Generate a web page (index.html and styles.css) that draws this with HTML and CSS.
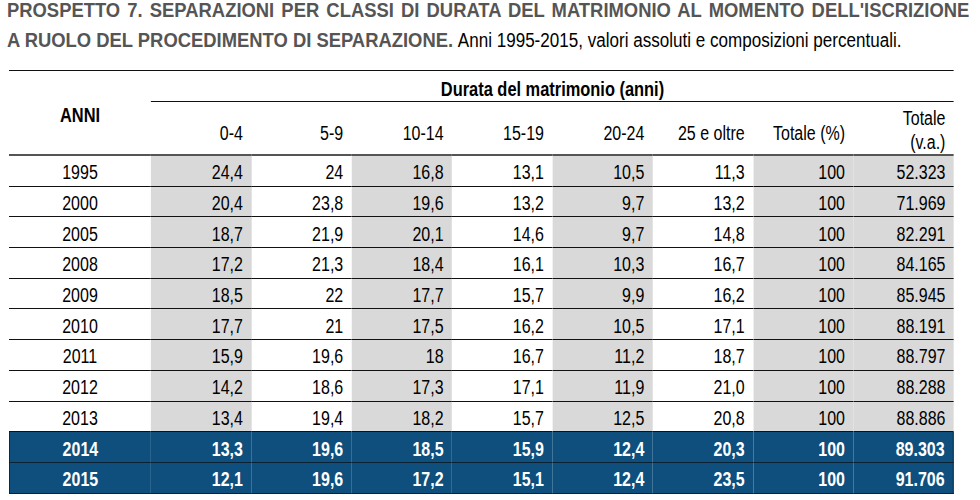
FILE: index.html
```html
<!DOCTYPE html>
<html lang="it">
<head>
<meta charset="utf-8">
<title>Prospetto 7</title>
<link rel="stylesheet" href="styles.css">
</head>
<body>
<div class="page">
  <p class="title"><span class="t1 title-bold">PROSPETTO 7. SEPARAZIONI PER CLASSI DI DURATA DEL MATRIMONIO AL MOMENTO DELL'ISCRIZIONE</span><span class="t2"><span class="title-bold">A RUOLO DEL PROCEDIMENTO DI SEPARAZIONE.</span> <span class="title-sub">Anni 1995-2015, valori assoluti e composizioni percentuali.</span></span></p>
  <table class="tbl">
    <colgroup>
      <col class="c-anni">
      <col span="8">
    </colgroup>
    <thead>
      <tr class="hrow-a">
        <th class="h-anni" rowspan="2">ANNI</th>
        <th class="h-group" colspan="8">Durata del matrimonio (anni)</th>
      </tr>
      <tr class="hrow-b">
        <th class="h-col">0-4</th>
        <th class="h-col">5-9</th>
        <th class="h-col">10-14</th>
        <th class="h-col">15-19</th>
        <th class="h-col">20-24</th>
        <th class="h-col">25 e oltre</th>
        <th class="h-col">Totale (%)</th>
        <th class="h-col h-two">Totale<br>(v.a.)</th>
      </tr>
    </thead>
    <tbody>
      <tr><td>1995</td><td class="sh">24,4</td><td>24</td><td class="sh">16,8</td><td>13,1</td><td class="sh">10,5</td><td>11,3</td><td class="sh">100</td><td class="sh">52.323</td></tr>
      <tr><td>2000</td><td class="sh">20,4</td><td>23,8</td><td class="sh">19,6</td><td>13,2</td><td class="sh">9,7</td><td>13,2</td><td class="sh">100</td><td class="sh">71.969</td></tr>
      <tr><td>2005</td><td class="sh">18,7</td><td>21,9</td><td class="sh">20,1</td><td>14,6</td><td class="sh">9,7</td><td>14,8</td><td class="sh">100</td><td class="sh">82.291</td></tr>
      <tr><td>2008</td><td class="sh">17,2</td><td>21,3</td><td class="sh">18,4</td><td>16,1</td><td class="sh">10,3</td><td>16,7</td><td class="sh">100</td><td class="sh">84.165</td></tr>
      <tr><td>2009</td><td class="sh">18,5</td><td>22</td><td class="sh">17,7</td><td>15,7</td><td class="sh">9,9</td><td>16,2</td><td class="sh">100</td><td class="sh">85.945</td></tr>
      <tr><td>2010</td><td class="sh">17,7</td><td>21</td><td class="sh">17,5</td><td>16,2</td><td class="sh">10,5</td><td>17,1</td><td class="sh">100</td><td class="sh">88.191</td></tr>
      <tr><td>2011</td><td class="sh">15,9</td><td>19,6</td><td class="sh">18</td><td>16,7</td><td class="sh">11,2</td><td>18,7</td><td class="sh">100</td><td class="sh">88.797</td></tr>
      <tr><td>2012</td><td class="sh">14,2</td><td>18,6</td><td class="sh">17,3</td><td>17,1</td><td class="sh">11,9</td><td>21,0</td><td class="sh">100</td><td class="sh">88.288</td></tr>
      <tr><td>2013</td><td class="sh">13,4</td><td>19,4</td><td class="sh">18,2</td><td>15,7</td><td class="sh">12,5</td><td>20,8</td><td class="sh">100</td><td class="sh">88.886</td></tr>
      <tr class="hl"><td>2014</td><td>13,3</td><td>19,6</td><td>18,5</td><td>15,9</td><td>12,4</td><td>20,3</td><td>100</td><td>89.303</td></tr>
      <tr class="hl"><td>2015</td><td>12,1</td><td>19,6</td><td>17,2</td><td>15,1</td><td>12,4</td><td>23,5</td><td>100</td><td>91.706</td></tr>
    </tbody>
  </table>
</div>
</body>
</html>
```

FILE: styles.css
```css
html, body {
  margin: 0;
  padding: 0;
  background: #fff;
}

body {
  font-family: "Liberation Sans", Arial, sans-serif;
  color: #000;
}

/* Arial Narrow is not available: Liberation Sans (Arial metrics) is
   condensed horizontally to approximate the narrow width. */
.page {
  padding: 0 0 0 7px;
  overflow: hidden;
}

.title {
  margin: -4px 0 0 0;
  width: 1046px;
  font-size: 20px;
  line-height: 29.5px;
  color: #000;
  transform: scaleX(0.92);
  transform-origin: left top;
}

.t1 {
  display: block;
  text-align: justify;
  text-align-last: justify;
  white-space: nowrap;
}

.t2 {
  display: block;
  white-space: nowrap;
}

.title-bold {
  font-weight: bold;
  color: #555;
}

.title-sub {
  display: inline-block;
  transform: scaleX(0.927);
  transform-origin: left center;
}

.tbl {
  margin: 15px 0 0 2px;
  width: 1152.4px;
  table-layout: fixed;
  border-collapse: separate;
  border-spacing: 0;
  border-top: 1px solid #111;
  font-size: 19.5px;
  line-height: 24px;
  transform: scaleX(0.82);
  transform-origin: left top;
}

.c-anni {
  width: 173.2px;
}

.tbl th {
  font-weight: normal;
  padding: 0;
}

.hrow-a {
  height: 31px;
}

.hrow-b {
  height: 54px;
}

.h-anni {
  font-size: 20px;
  font-weight: bold !important;
  text-align: center;
  vertical-align: middle;
  padding-top: 5px !important;
  border-bottom: 2px solid #555;
}

.h-group {
  font-size: 20px;
  font-weight: bold !important;
  text-align: center;
  vertical-align: middle;
  padding-top: 5px !important;
  border-bottom: 1px solid #111;
}

.h-col {
  text-align: right;
  vertical-align: middle;
  padding: 9px 10.4px 0 0 !important;
  border-bottom: 2px solid #555;
  white-space: nowrap;
}

.h-col.h-two {
  padding-top: 3px !important;
}

.tbl tbody tr {
  height: 30.7px;
}

.tbl td {
  padding: 3px 10.4px 0 0;
  text-align: right;
  vertical-align: middle;
  border-bottom: 1px solid #111;
  white-space: nowrap;
}

.tbl td:first-child {
  text-align: center;
  padding-right: 0;
}

.tbl td.sh {
  background: #d9d9d9;
}

.tbl tr.hl td {
  background: #0e4f7d;
  color: #fff;
  font-weight: bold;
  border-bottom: 1px solid #0a2233;
}

.tbl tr.hl td:first-child {
  border-left: 1px solid #0a2233;
}

.tbl tr.hl td:last-child {
  border-right: 1px solid #0a2233;
}
```
